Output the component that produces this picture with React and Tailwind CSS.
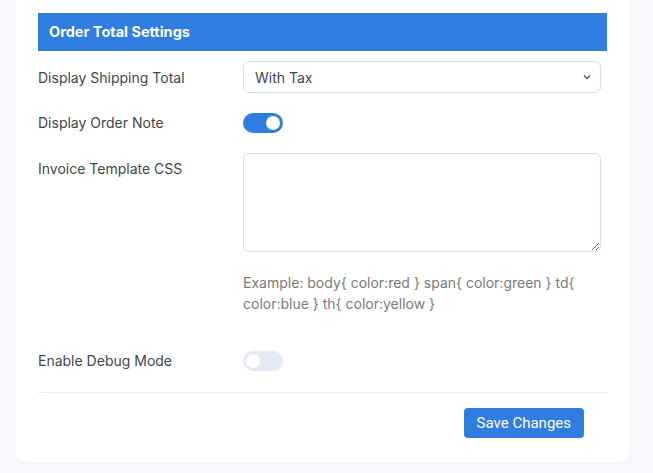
import React from "react";

function Toggle({ on }) {
  return (
    <div
      className={`flex h-5 w-10 items-center rounded-full p-[3px] ${
        on ? "justify-end bg-[#2f7de1]" : "justify-start bg-[#e3eaf5]"
      }`}
    >
      <div className="h-[14px] w-[14px] rounded-full bg-white" />
    </div>
  );
}

export default function App() {
  return (
    <div className="min-h-[473px] w-full bg-[#f7f8fc] pl-4 pr-6 pb-3 [font-family:Inter,'Liberation_Sans',sans-serif]">
      <div className="rounded-b-lg bg-white px-[22px] pt-[13px] pb-[24px] shadow-[0_1px_2px_rgba(0,0,0,0.04)]">
        <div className="flex h-[38px] items-center bg-[#2f7de1] px-[11px] text-[14.5px] font-bold text-white">
          Order Total Settings
        </div>

        <div className="mt-[10px] flex items-center pr-[6px]">
          <div className="w-[205px] text-[14px] text-[#3f4650]">Display Shipping Total</div>
          <div className="flex h-8 flex-1 items-center justify-between rounded-md border border-[#d5dfec] bg-white pl-[11px] pr-[8px] text-[14px] text-[#3f4650]">
            <span>With Tax</span>
            <svg width="10" height="10" viewBox="0 0 10 10" fill="none">
              <path d="M2 3.5 L5 6.5 L8 3.5" stroke="#555" strokeWidth="1.3" />
            </svg>
          </div>
        </div>

        <div className="mt-[19px] flex items-center">
          <div className="w-[205px] text-[14px] text-[#3f4650]">Display Order Note</div>
          <Toggle on />
        </div>

        <div className="mt-5 flex items-start pr-[6px]">
          <div className="w-[205px] pt-[5px] text-[14px] text-[#3f4650]">Invoice Template CSS</div>
          <div className="flex-1">
            <textarea className="block h-[99px] w-full resize-y rounded-md border border-[#d5dfec] bg-white" />
            <p className="mt-[20px] pr-6 text-[14px] leading-[21px] text-[#7a7a7a]">
              Example: body{"{"} color:red {"}"} span{"{"} color:green {"}"} td{"{"} color:blue {"}"} th{"{"} color:yellow {"}"}
            </p>
          </div>
        </div>

        <div className="mt-[36px] flex items-center">
          <div className="w-[205px] text-[14px] text-[#3f4650]">Enable Debug Mode</div>
          <Toggle />
        </div>

        <div className="mt-[21px] border-t border-[#e9eef5]" />

        <div className="mt-[15px] flex justify-end pr-[23px]">
          <button className="h-[30px] rounded-[4px] bg-[#2f7de1] px-[13px] text-[15px] text-white [font-family:Roboto,sans-serif]">
            Save Changes
          </button>
        </div>
      </div>
    </div>
  );
}
